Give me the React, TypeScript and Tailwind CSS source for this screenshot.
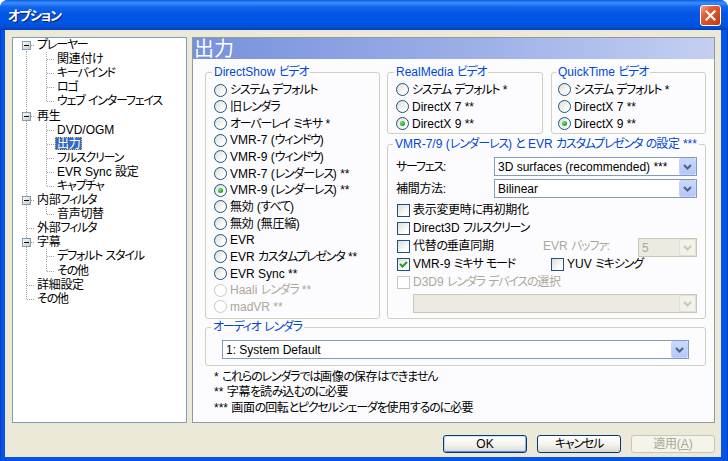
import React from 'react';

const KANA = /[\u3040-\u30FF]/;
const CJK = /[\u3000-\u303F\u4E00-\u9FFF\uFF00-\uFFEF]/;

function T({ s }: { s: string }) {
  const parts = s.match(/[\u3040-\u30FF]+|[\u3000-\u303F\u4E00-\u9FFF\uFF00-\uFFEF]+|[^\u3000-\u9FFF\uFF00-\uFFEF]+/g) || [];
  return (
    <span className="whitespace-pre">
      {parts.map((p, i) =>
        KANA.test(p[0]) ? (
          <span key={i} className="tracking-[-1.2px]">
            {p}
          </span>
        ) : CJK.test(p[0]) ? (
          <span key={i} className="tracking-[-0.3px]">
            {p}
          </span>
        ) : (
          <span key={i}>{p}</span>
        )
      )}
    </span>
  );
}

type RadioProps = { label: string; checked?: boolean; disabled?: boolean };

function Radio({ label, checked = false, disabled = false }: RadioProps) {
  return (
    <div className="flex items-center gap-[3px] h-full">
      <span
        className={`shrink-0 w-[13px] h-[13px] rounded-full border flex items-center justify-center ${
          disabled
            ? 'border-[#CACAC4] bg-white'
            : 'border-[#1C5180] bg-[linear-gradient(135deg,#DCDCD7,#FFFFFF_75%)]'
        }`}
      >
        {checked && (
          <span className="w-[5px] h-[5px] rounded-full bg-[radial-gradient(circle_at_35%_35%,#7BE07A,#21A121_70%)]" />
        )}
      </span>
      <span className={`whitespace-nowrap leading-none ${disabled ? 'text-[#ACA899]' : 'text-black'}`}>
        <T s={label} />
      </span>
    </div>
  );
}

type CheckProps = { label: string; checked?: boolean; disabled?: boolean; className?: string };

function Check({ label, checked = false, disabled = false, className = '' }: CheckProps) {
  return (
    <div className={`flex items-center gap-[3px] h-full ${className}`}>
      <span
        className={`shrink-0 w-[13px] h-[13px] border flex items-center justify-center ${
          disabled
            ? 'border-[#CAC8BB] bg-white'
            : 'border-[#1C5180] bg-[linear-gradient(135deg,#DCDCD7,#FFFFFF_75%)]'
        }`}
      >
        {checked && (
          <svg width="9" height="9" viewBox="0 0 9 9">
            <path d="M1 4 L3.5 6.5 L8 2" stroke="#21A121" strokeWidth="2" fill="none" />
          </svg>
        )}
      </span>
      <span className={`whitespace-nowrap leading-none ${disabled ? 'text-[#ACA899]' : 'text-black'}`}>
        <T s={label} />
      </span>
    </div>
  );
}

type ComboProps = { value?: string; disabled?: boolean; className?: string };

function Combo({ value = '', disabled = false, className = '' }: ComboProps) {
  return (
    <div
      className={`flex items-stretch border h-[19px] ${
        disabled ? 'border-[#C9C7BA] bg-[#EDEBE1]' : 'border-[#7F9DB9] bg-white'
      } ${className}`}
    >
      <span
        className={`flex-1 flex items-center pl-[3px] whitespace-nowrap overflow-hidden leading-none ${
          disabled ? 'text-[#ACA899]' : 'text-black'
        }`}
      >
        {value}
      </span>
      <span
        className={`w-[17px] rounded-[2px] border flex items-center justify-center ${
          disabled
            ? 'border-[#E2E0D6] bg-[#F2F1EA]'
            : 'border-[#C3D3FD] bg-[linear-gradient(180deg,#C9D8FC,#B4C8F6)]'
        }`}
      >
        <svg width="9" height="6" viewBox="0 0 9 6">
          <path d="M1 1 L4.5 4.5 L8 1" stroke={disabled ? '#C9C7BA' : '#4D6185'} strokeWidth="2" fill="none" />
        </svg>
      </span>
    </div>
  );
}

type GroupProps = { label: string; labelPos: string; className?: string; children?: React.ReactNode };

function Group({ label, labelPos, className = '', children }: GroupProps) {
  return (
    <div className={`relative border border-[#D0D0BF] rounded-[3px] ${className}`}>
      <span
        className={`absolute top-[-8px] ${labelPos} px-[2px] bg-[#FCFCFE] text-[#0046D5] leading-[14px] whitespace-nowrap`}
      >
        <T s={label} />
      </span>
      {children}
    </div>
  );
}

type BtnProps = { label: React.ReactNode; def?: boolean; disabled?: boolean };

function Btn({ label, def = false, disabled = false }: BtnProps) {
  return (
    <div
      className={`w-[84px] h-[18px] rounded-[3px] border flex items-center justify-center leading-none ${
        disabled
          ? 'border-[#C9C7BA] bg-[#F5F4EA] text-[#ACA899]'
          : 'border-[#003C74] bg-[linear-gradient(180deg,#FFFFFF,#F3F3EF_55%,#DCD8CC)] text-black'
      } ${def ? 'shadow-[inset_0_1px_0_#CEE7FF,inset_1px_0_0_#BCD4F6,inset_-1px_0_0_#89ADE4,inset_0_-1px_0_#6982EE]' : ''}`}
    >
      {label}
    </div>
  );
}

type TreeItem = { t: string; lvl: 0 | 1; box?: boolean; first?: boolean; last?: boolean; lastChild?: boolean; sel?: boolean };

const tree: TreeItem[] = [
  { t: 'プレーヤー', lvl: 0, box: true, first: true },
  { t: '関連付け', lvl: 1 },
  { t: 'キーバインド', lvl: 1 },
  { t: 'ロゴ', lvl: 1 },
  { t: 'ウェブ インターフェイス', lvl: 1, lastChild: true },
  { t: '再生', lvl: 0, box: true },
  { t: 'DVD/OGM', lvl: 1 },
  { t: '出力', lvl: 1, sel: true },
  { t: 'フルスクリーン', lvl: 1 },
  { t: 'EVR Sync 設定', lvl: 1 },
  { t: 'キャプチャ', lvl: 1, lastChild: true },
  { t: '内部フィルタ', lvl: 0, box: true },
  { t: '音声切替', lvl: 1, lastChild: true },
  { t: '外部フィルタ', lvl: 0 },
  { t: '字幕', lvl: 0, box: true },
  { t: 'デフォルト スタイル', lvl: 1 },
  { t: 'その他', lvl: 1, lastChild: true },
  { t: '詳細設定', lvl: 0 },
  { t: 'その他', lvl: 0, last: true },
];

const DOT = { stroke: '#A0A0A0', strokeDasharray: '1 1', shapeRendering: 'crispEdges' as const };

function TreeRow({ item }: { item: TreeItem }) {
  return (
    <div className="h-[14.1px] flex items-center">
      {item.lvl === 0 ? (
        <svg width="22" height="14" viewBox="0 0 22 14" className="shrink-0">
          <line x1="13.5" x2="13.5" y1={item.first ? 7 : 0} y2={item.last ? 8 : 14} {...DOT} />
          <line x1="14" x2="22" y1="7.5" y2="7.5" {...DOT} />
          {item.box && (
            <g shapeRendering="crispEdges">
              <defs>
                <linearGradient id="tbx" x1="0" y1="0" x2="1" y2="1">
                  <stop offset="0" stopColor="#FFFFFF" />
                  <stop offset="1" stopColor="#C6C6BC" />
                </linearGradient>
              </defs>
              <rect x="9.5" y="3.5" width="8" height="8" fill="url(#tbx)" stroke="#7F9DB9" />
              <line x1="11" x2="16" y1="7.5" y2="7.5" stroke="#000000" />
            </g>
          )}
        </svg>
      ) : (
        <svg width="42" height="14" viewBox="0 0 42 14" className="shrink-0">
          <line x1="13.5" x2="13.5" y1="0" y2="14" {...DOT} />
          <line x1="33.5" x2="33.5" y1="0" y2={item.lastChild ? 8 : 14} {...DOT} />
          <line x1="34" x2="42" y1="7.5" y2="7.5" {...DOT} />
        </svg>
      )}
      <span
        className={`inline-flex items-center h-[13px] px-[1px] border leading-none whitespace-nowrap ${
          item.sel ? 'bg-[#316AC5] text-white border-dotted border-[#E8B64C]' : 'border-transparent text-black'
        }`}
      >
        <T s={item.t} />
      </span>
    </div>
  );
}

const dsRadios: RadioProps[] = [
  { label: 'システム デフォルト' },
  { label: '旧レンダラ' },
  { label: 'オーバーレイ ミキサ *' },
  { label: 'VMR-7 (ウィンドウ)' },
  { label: 'VMR-9 (ウィンドウ)' },
  { label: 'VMR-7 (レンダーレス) **' },
  { label: 'VMR-9 (レンダーレス) **', checked: true },
  { label: '無効 (すべて)' },
  { label: '無効 (無圧縮)' },
  { label: 'EVR' },
  { label: 'EVR カスタムプレゼンタ **' },
  { label: 'EVR Sync **' },
  { label: 'Haali レンダラ **', disabled: true },
  { label: 'madVR **', disabled: true },
];

const smallRadios: RadioProps[] = [
  { label: 'システム デフォルト *' },
  { label: 'DirectX 7 **' },
  { label: 'DirectX 9 **', checked: true },
];

export default function App() {
  return (
    <div className="w-[728px] h-[461px] overflow-hidden bg-white font-['Liberation_Sans','Noto_Sans_CJK_JP',sans-serif] text-[12px] [font-feature-settings:'palt']">
      <div className="w-full h-full flex flex-col rounded-t-[8px] overflow-hidden bg-[#0753E4]">
        {/* Title bar */}
        <div className="h-[30px] shrink-0 flex items-center pl-[8px] pr-[7px] bg-[linear-gradient(180deg,#0A5EE8_0%,#3D8FF8_10%,#1366EE_22%,#0357E6_45%,#0054E3_75%,#0050D8_90%,#003DB5_100%)]">
          <span className="text-white font-bold text-[13px] leading-none [text-shadow:1px_1px_0_#0A1E6E]">
            <T s="オプション" />
          </span>
          <div className="ml-auto w-[21px] h-[21px] rounded-[3px] border border-white flex items-center justify-center bg-[linear-gradient(135deg,#F2A48A,#E35A32_35%,#D0431A_80%,#C03A14)]">
            <svg width="11" height="11" viewBox="0 0 11 11">
              <path d="M1.5 1.5 L9.5 9.5 M9.5 1.5 L1.5 9.5" stroke="#FFFFFF" strokeWidth="2.2" strokeLinecap="square" />
            </svg>
          </div>
        </div>

        {/* Frame + body */}
        <div className="flex-1 flex pl-[4px] pr-[6px] pb-[4px] border-l border-r border-b border-[#0B3BC9]">
          <div className="flex-1 bg-[#ECE9D8] flex flex-col pt-[7px] pl-[7px] pr-[6px] pb-[4px]">
            <div className="h-[386px] flex gap-[5px]">
              {/* Tree */}
              <div className="w-[175px] h-full border border-[#7F9DB9] bg-white flex flex-col">
                {tree.map((it, i) => (
                  <TreeRow key={i} item={it} />
                ))}
              </div>

              {/* Right page */}
              <div className="w-[523px] h-full border border-[#919B9C] bg-[#FCFCFE] flex flex-col">
                <div className="h-[21px] shrink-0 flex items-center pl-[1px] bg-[linear-gradient(90deg,#7891DC,#9DB0E7_55%,#C4CFF1)]">
                  <span className="text-white text-[20px] leading-none">出力</span>
                </div>

                <div className="flex flex-col pl-[12px] pr-[8px] pt-[13px]">
                  <div className="flex gap-[7px]">
                    {/* DirectShow */}
                    <Group label="DirectShow ビデオ" labelPos="left-[6px]" className="w-[175px] h-[247px] pt-[9px] pl-[8px]">
                      {dsRadios.map((r, i) => (
                        <div key={i} className="h-[16.67px]">
                          <Radio {...r} />
                        </div>
                      ))}
                    </Group>

                    {/* Right column */}
                    <div className="w-[319px] flex flex-col gap-[10px]">
                      <div className="flex gap-[8px]">
                        <Group label="RealMedia ビデオ" labelPos="left-[6px]" className="w-[156px] h-[62px] pt-[8px] pl-[8px]">
                          {smallRadios.map((r, i) => (
                            <div key={i} className="h-[17px]">
                              <Radio {...r} />
                            </div>
                          ))}
                        </Group>
                        <Group label="QuickTime ビデオ" labelPos="left-[4px]" className="w-[155px] h-[62px] pt-[8px] pl-[6px]">
                          {smallRadios.map((r, i) => (
                            <div key={i} className="h-[17px]">
                              <Radio {...r} />
                            </div>
                          ))}
                        </Group>
                      </div>

                      <Group
                        label="VMR-7/9 (レンダーレス) と EVR カスタムプレゼンタ の設定 ***"
                        labelPos="left-[5px]"
                        className="w-[319px] h-[175px] pt-[12px] pl-[8px] pr-[8px] flex flex-col"
                      >
                        <div className="h-[19px] flex items-center">
                          <span className="w-[98px] leading-none">
                            <T s="サーフェス:" />
                          </span>
                          <Combo value="3D surfaces (recommended) ***" className="flex-1" />
                        </div>
                        <div className="h-[19px] mt-[3px] flex items-center">
                          <span className="w-[98px] leading-none">
                            <T s="補間方法:" />
                          </span>
                          <Combo value="Bilinear" className="flex-1" />
                        </div>
                        <div className="mt-[3px] flex flex-col pl-[1px]">
                          <div className="h-[18px]">
                            <Check label="表示変更時に再初期化" />
                          </div>
                          <div className="h-[18px]">
                            <Check label="Direct3D フルスクリーン" />
                          </div>
                          <div className="h-[18px] flex items-center">
                            <Check label="代替の垂直同期" className="w-[146px]" />
                            <span className="w-[95px] text-[#ACA899] leading-none">
                              <T s="EVR バッファ:" />
                            </span>
                            <Combo value="5" disabled className="w-[59px] h-[18px] mt-[3px]" />
                          </div>
                          <div className="h-[18px] flex items-center">
                            <Check label="VMR-9 ミキサ モード" checked className="w-[154px]" />
                            <Check label="YUV ミキシング" />
                          </div>
                          <div className="h-[18px]">
                            <Check label="D3D9 レンダラ デバイスの選択" disabled />
                          </div>
                        </div>
                        <Combo disabled className="mt-[3px] ml-[17px]" />
                      </Group>
                    </div>
                  </div>

                  {/* Audio renderer */}
                  <Group label="オーディオ レンダラ" labelPos="left-[5px]" className="mt-[8px] h-[39px] pt-[12px] pl-[16px]">
                    <Combo value="1: System Default" className="w-[467px]" />
                  </Group>

                  <div className="mt-[3px] pl-[9px] flex flex-col">
                    <div className="h-[15.5px] flex items-center leading-none whitespace-nowrap">
                      <T s="* これらのレンダラでは画像の保存はできません" />
                    </div>
                    <div className="h-[15.5px] flex items-center leading-none whitespace-nowrap">
                      <T s="** 字幕を読み込むのに必要" />
                    </div>
                    <div className="h-[15.5px] flex items-center leading-none whitespace-nowrap">
                      <T s="*** 画面の回転とピクセルシェーダを使用するのに必要" />
                    </div>
                  </div>
                </div>
              </div>
            </div>

            {/* Buttons */}
            <div className="mt-[12px] h-[18px] flex justify-end gap-[10px]">
              <Btn label="OK" def />
              <Btn label={<T s="キャンセル" />} />
              <Btn
                label={
                  <span>
                    <T s="適用" />(<span className="underline">A</span>)
                  </span>
                }
                disabled
              />
            </div>
          </div>
        </div>
      </div>
    </div>
  );
}
